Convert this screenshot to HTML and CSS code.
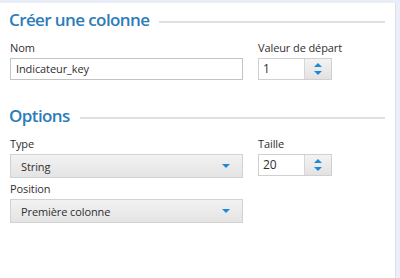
FILE: index.html
```html
<!DOCTYPE html>
<html lang="fr">
<head>
    <meta charset="UTF-8">
    <title>Créer une colonne</title>
    <link rel="stylesheet" href="styles.css">
</head>
<body>
<div class="frame">
    <div class="panel">
        <section class="group">
            <div class="group-head">
                <h2>Créer une colonne</h2>
                <span class="rule"></span>
            </div>
            <div class="row">
                <div class="field wide">
                    <label>Nom</label>
                    <div class="textbox">Indicateur_key</div>
                </div>
                <div class="field">
                    <label>Valeur de départ</label>
                    <div class="spin">
                        <div class="spin-value">1</div>
                        <div class="spin-btns">
                            <span class="arrow up"></span>
                            <span class="arrow down"></span>
                        </div>
                    </div>
                </div>
            </div>
        </section>

        <section class="group options">
            <div class="group-head">
                <h2>Options</h2>
                <span class="rule"></span>
            </div>
            <div class="row">
                <div class="field wide">
                    <label>Type</label>
                    <div class="combo">String<span class="arrow down"></span></div>
                </div>
                <div class="field">
                    <label>Taille</label>
                    <div class="spin">
                        <div class="spin-value">20</div>
                        <div class="spin-btns">
                            <span class="arrow up"></span>
                            <span class="arrow down"></span>
                        </div>
                    </div>
                </div>
            </div>
            <div class="row">
                <div class="field wide">
                    <label>Position</label>
                    <div class="combo">Première colonne<span class="arrow down"></span></div>
                </div>
            </div>
        </section>
    </div>
    <div class="edge"></div>
</div>
</body>
</html>
```

FILE: styles.css
```css
body {
    margin: 0;
    font-family: "Open Sans", Arial, sans-serif;
    color: #2f2f2f;
    background: #fff;
}
.frame {
    display: flex;
    height: 278px;
    border-top: 3px solid #e9edf7;
    box-sizing: border-box;
}
.panel {
    flex: 1;
    padding: 5px 10px 0 9px;
}
.edge {
    width: 4px;
    background: #eceef8;
    border-left: 1px solid #dcdfe8;
}
.group-head {
    display: flex;
    align-items: center;
    gap: 10px;
}
h2 {
    margin: 0;
    font-size: 17px;
    font-weight: 600;
    letter-spacing: -0.6px;
    color: #2c7cba;
    line-height: 24px;
}
.rule {
    flex: 1;
    height: 2px;
    background: #e0e0e0;
    margin-top: 4px;
}
.options {
    margin-top: 24px;
}
.row {
    display: flex;
    gap: 15px;
    padding-left: 1px;
    margin-top: 8px;
}
.row + .row {
    margin-top: 3px;
}
.field {
    display: flex;
    flex-direction: column;
}
.wide {
    width: 233px;
}
label {
    font-size: 11px;
    letter-spacing: -0.1px;
    line-height: 16px;
    margin-bottom: 2px;
}
.textbox {
    height: 20px;
    border: 1px solid #c3c3c3;
    padding-left: 5px;
    font-size: 11px;
    letter-spacing: -0.1px;
    line-height: 20px;
}
.spin {
    display: flex;
    width: 72px;
    height: 20px;
    border: 1px solid #d0d0d0;
}
.spin-value {
    flex: 1;
    padding-left: 4px;
    font-size: 12px;
    line-height: 20px;
}
.spin-btns {
    width: 26px;
    display: flex;
    flex-direction: column;
    align-items: center;
    justify-content: center;
    gap: 4px;
    background: linear-gradient(#f3f3f3, #e2e2e2);
    border-left: 1px solid #d6d6d6;
}
.arrow {
    width: 0;
    height: 0;
    border-left: 4.5px solid transparent;
    border-right: 4.5px solid transparent;
}
.arrow.up {
    border-bottom: 4.5px solid #1f8ad2;
}
.arrow.down {
    border-top: 4.5px solid #1f8ad2;
}
.combo {
    display: flex;
    align-items: center;
    justify-content: space-between;
    height: 22px;
    padding: 0 12px 0 10px;
    border: 1px solid #d2d2d2;
    background: linear-gradient(#f2f2f2, #e4e4e4);
    font-size: 11px;
    letter-spacing: -0.1px;
}
```
